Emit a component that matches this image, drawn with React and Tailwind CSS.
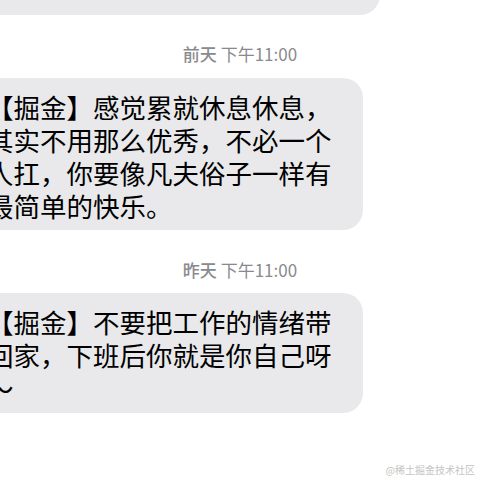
export default function App() {
  return (
    <div className="relative w-[480px] h-[480px] overflow-hidden bg-white font-['Noto_Sans_CJK_SC',sans-serif] text-black">
      <div className="flex flex-col items-start">
        <div className="ml-[-25px] mt-[-76px] w-[405px] rounded-[20px] bg-[#e9e9eb] pl-[12px] pt-[10px] pb-[14px] text-[26.5px] leading-[33.3px] whitespace-nowrap">
          <div>更好的自己，</div>
          <div>你的努力，终将成就更好的你</div>
        </div>

        <div className="mt-[29px] mb-[14px] w-full text-center text-[17px] leading-[20px] text-[#8a8a8e]">
          <span className="font-medium">前天</span> 下午11:00
        </div>

        <div className="ml-[-25px] w-[388px] rounded-[20px] bg-[#e9e9eb] pl-[12px] pt-[12px] pb-[7px] text-[26.5px] leading-[33.3px] whitespace-nowrap">
          <div>【掘金】感觉累就休息休息，</div>
          <div>其实不用那么优秀，不必一个</div>
          <div>人扛，你要像凡夫俗子一样有</div>
          <div>最简单的快乐。</div>
        </div>

        <div className="mt-[30px] mb-[13px] w-full text-center text-[17px] leading-[20px] text-[#8a8a8e]">
          <span className="font-medium">昨天</span> 下午11:00
        </div>

        <div className="ml-[-25px] w-[388px] rounded-[20px] bg-[#e9e9eb] pl-[12px] pt-[12px] pb-[8px] text-[26.5px] leading-[33.3px] whitespace-nowrap">
          <div>【掘金】不要把工作的情绪带</div>
          <div>回家，下班后你就是你自己呀</div>
          <div>～</div>
        </div>
      </div>

      <div className="absolute right-[5px] bottom-[4px] text-[10px] leading-[12px] text-[#c4c4c4]">
        @稀土掘金技术社区
      </div>
    </div>
  );
}
